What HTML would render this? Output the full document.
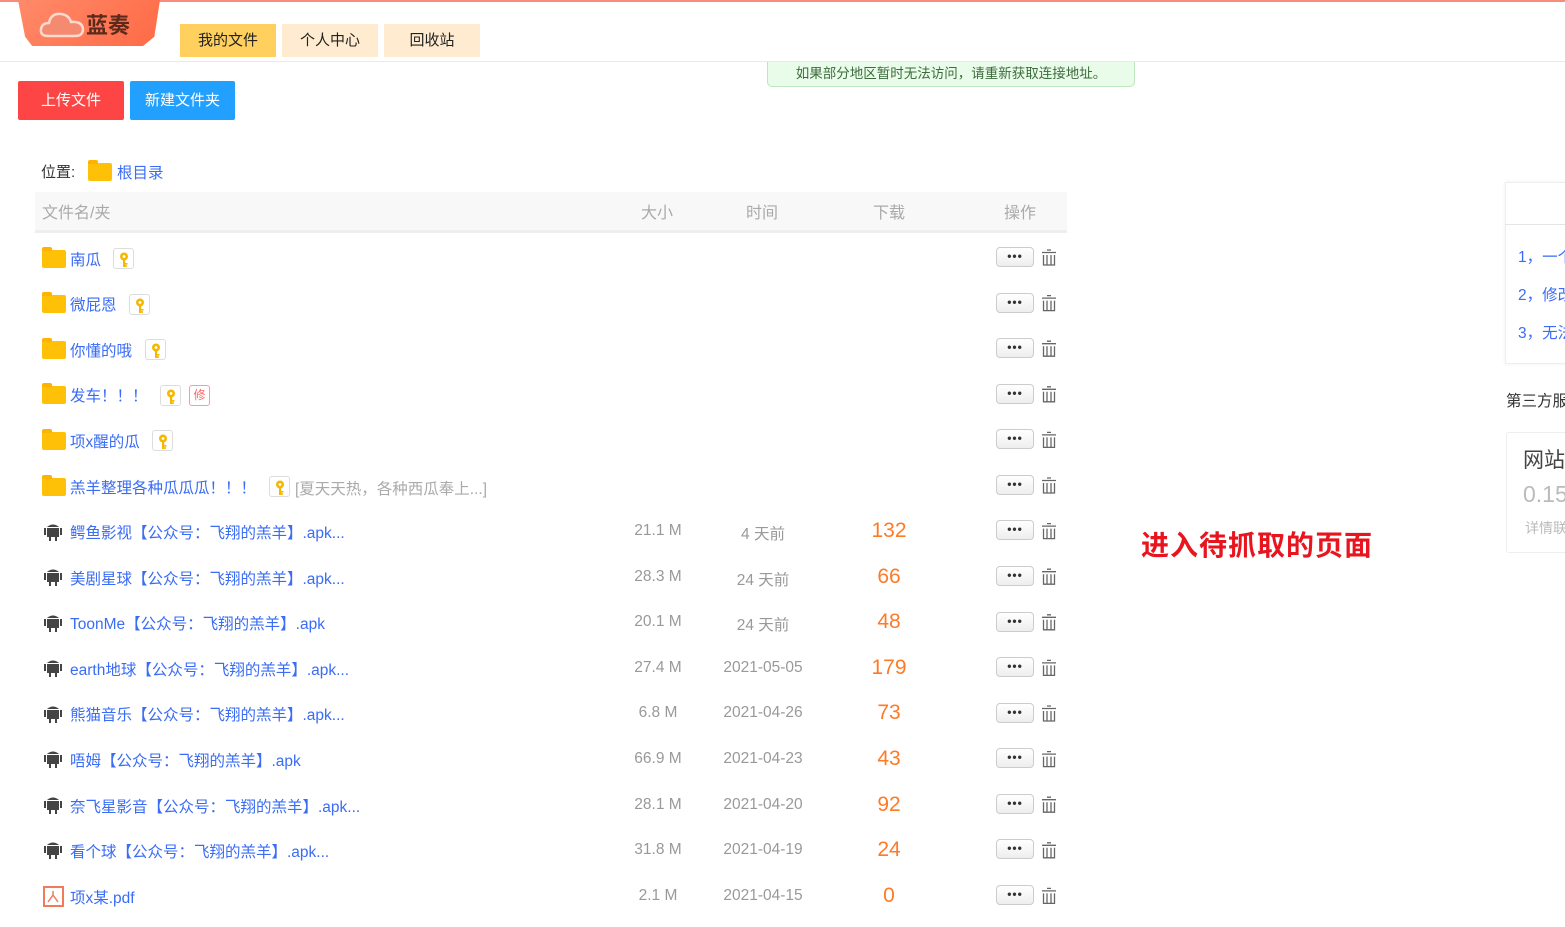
<!DOCTYPE html>
<html><head><meta charset="utf-8"><style>
*{margin:0;padding:0;box-sizing:border-box}
body{width:1565px;height:927px;overflow:hidden;background:#fff;font-family:"Liberation Sans","Noto Sans CJK SC",sans-serif;position:relative;font-size:15px}
.a{position:absolute;white-space:nowrap}
.topline{left:0;top:0;width:1565px;height:2px;background:#f98b7a}
.hdr{left:0;top:61px;width:1565px;height:1px;background:#eaeaea}
.logo{left:18px;top:0;width:142px;height:46px;background:linear-gradient(135deg,#ff8a6a,#ff6a45);clip-path:polygon(0 0,100% 0,96% 80%,88% 100%,10% 100%,5% 80%)}
.tab{top:24px;height:33px;line-height:33px;text-align:center;font-size:15px;color:#222}
.btn{top:81px;height:39px;line-height:39px;color:#fff;text-align:center;border-radius:2px;font-size:15px}
.note{left:767px;top:62px;width:368px;height:25px;background:#e9fbe9;border:1px solid #bde6bd;border-top:none;border-radius:0 0 5px 5px;font-size:13.5px;color:#3d6b3d;text-align:center;line-height:23px}
.th{top:192px;left:35px;width:1032px;height:41px;background:#f8f8f8;border-bottom:3px solid #eee}
.thc{top:199px;color:#aaa;font-size:16px}
.nm{left:70px;color:#3a6cf6;font-size:15.5px}
.sz{color:#999;font-size:15.5px;text-align:center}
.dl{color:#ff7a26;font-size:21px;text-align:center;width:80px;left:849px}
.more{left:996px;width:38px;height:20px;border:1px solid #ccc;border-radius:4px;background:linear-gradient(#fff,#eee);text-align:center;font-size:12px;line-height:16px;color:#333;font-weight:bold;letter-spacing:1px}
.key{width:21px;height:21px;border:1px solid #ddd;border-radius:3px;color:#f66;font-size:12px;text-align:center;line-height:19px}
.key svg{position:absolute;left:5px;top:3px}
.fold{left:42px;width:24px;height:18px;background:#ffc107;border-radius:2px}
.fold:before{content:"";position:absolute;left:0;top:-3px;width:10px;height:4px;background:#ffb300;border-radius:2px 2px 0 0}
</style></head><body>
<svg width="0" height="0" style="position:absolute"><defs>
<g id="k"><circle cx="5" cy="4.5" r="4" fill="#f5b800"/><circle cx="5" cy="4.5" r="1.4" fill="#fff"/><rect x="4" y="8" width="2.2" height="7" fill="#f5b800"/><rect x="6" y="11" width="2.5" height="1.6" fill="#f5b800"/><rect x="6" y="13.2" width="2" height="1.6" fill="#f5b800"/></g>
<g id="an"><g fill="#444"><rect x="4" y="6" width="12" height="9"/><path d="M4 5 Q10 0 16 5Z"/><rect x="1" y="6" width="2" height="7"/><rect x="17" y="6" width="2" height="7"/><rect x="6" y="15" width="2" height="4"/><rect x="12" y="15" width="2" height="4"/></g></g>
</defs></svg>
<div class="a topline"></div>
<div class="a logo"></div>
<svg class="a" style="left:38px;top:8px" width="48" height="32" viewBox="0 0 48 32"><path d="M10 28 Q2 28 3 21 Q4 15 11 15 Q13 5 23 6 Q31 7 33 14 Q44 13 45 21 Q45 28 37 28 Z" fill="#f48a70" stroke="#ffd9cf" stroke-width="2.5"/></svg>
<div class="a" style="left:86px;top:8px;font-size:22px;font-weight:bold;color:#5a2a1c">蓝奏</div>
<div class="a hdr"></div>
<div class="a tab" style="left:180px;width:96px;background:#ffd05e">我的文件</div>
<div class="a tab" style="left:282px;width:96px;background:#ffecd0">个人中心</div>
<div class="a tab" style="left:384px;width:96px;background:#ffecd0">回收站</div>
<div class="a note">如果部分地区暂时无法访问，请重新获取连接地址。</div>
<div class="a btn" style="left:18px;width:106px;background:#fe4545">上传文件</div>
<div class="a btn" style="left:130px;width:105px;background:#22a0ff">新建文件夹</div>
<div class="a" style="left:41px;top:161px;color:#333;font-size:15px">位置:</div>
<div class="a fold" style="left:88px;top:163px"></div>
<div class="a" style="left:117px;top:161px;color:#3a6cf6;font-size:15.5px">根目录</div>
<div class="a th"></div>
<div class="a thc" style="left:42px">文件名/夹</div>
<div class="a thc" style="left:641px">大小</div>
<div class="a thc" style="left:746px">时间</div>
<div class="a thc" style="left:873px">下载</div>
<div class="a thc" style="left:1004px">操作</div>

<div class="a fold" style="top:250px"></div><div class="a nm" style="top:248px">南瓜</div><div class="a key" style="left:113px;top:248px"><svg width="10" height="16"><use href="#k"/></svg></div>
<div class="a fold" style="top:295px"></div><div class="a nm" style="top:293px">微屁恩</div><div class="a key" style="left:129px;top:294px"><svg width="10" height="16"><use href="#k"/></svg></div>
<div class="a fold" style="top:341px"></div><div class="a nm" style="top:339px">你懂的哦</div><div class="a key" style="left:145px;top:339px"><svg width="10" height="16"><use href="#k"/></svg></div>
<div class="a fold" style="top:386px"></div><div class="a nm" style="top:384px">发车！！！</div><div class="a key" style="left:160px;top:385px"><svg width="10" height="16"><use href="#k"/></svg></div><div class="a key" style="left:189px;top:385px;border-color:#f99">修</div>
<div class="a fold" style="top:432px"></div><div class="a nm" style="top:430px">项x醒的瓜</div><div class="a key" style="left:152px;top:430px"><svg width="10" height="16"><use href="#k"/></svg></div>
<div class="a fold" style="top:478px"></div><div class="a nm" style="top:476px">羔羊整理各种瓜瓜瓜！！！</div><div class="a key" style="left:269px;top:476px"><svg width="10" height="16"><use href="#k"/></svg></div><div class="a" style="left:295px;top:477px;color:#aaa;font-size:15.5px">[夏天天热，各种西瓜奉上...]</div>

<svg class="a" style="left:43px;top:522px" width="20" height="20"><use href="#an"/></svg>
<svg class="a" style="left:43px;top:567px" width="20" height="20"><use href="#an"/></svg>
<svg class="a" style="left:43px;top:613px" width="20" height="20"><use href="#an"/></svg>
<svg class="a" style="left:43px;top:658px" width="20" height="20"><use href="#an"/></svg>
<svg class="a" style="left:43px;top:704px" width="20" height="20"><use href="#an"/></svg>
<svg class="a" style="left:43px;top:749px" width="20" height="20"><use href="#an"/></svg>
<svg class="a" style="left:43px;top:795px" width="20" height="20"><use href="#an"/></svg>
<svg class="a" style="left:43px;top:840px" width="20" height="20"><use href="#an"/></svg>
<svg class="a" style="left:43px;top:886px" width="21" height="21" viewBox="0 0 21 21"><rect x="1" y="1" width="19" height="19" fill="none" stroke="#f07a5a" stroke-width="2"/><path d="M10 5 L10 9 L5 16 M10 9 L15 16" stroke="#f07a5a" stroke-width="1.5" fill="none"/></svg>
<div class="a nm" style="top:521px">鳄鱼影视【公众号：飞翔的羔羊】.apk...</div>
<div class="a nm" style="top:567px">美剧星球【公众号：飞翔的羔羊】.apk...</div>
<div class="a nm" style="top:612px">ToonMe【公众号：飞翔的羔羊】.apk</div>
<div class="a nm" style="top:658px">earth地球【公众号：飞翔的羔羊】.apk...</div>
<div class="a nm" style="top:703px">熊猫音乐【公众号：飞翔的羔羊】.apk...</div>
<div class="a nm" style="top:749px">唔姆【公众号：飞翔的羔羊】.apk</div>
<div class="a nm" style="top:795px">奈飞星影音【公众号：飞翔的羔羊】.apk...</div>
<div class="a nm" style="top:840px">看个球【公众号：飞翔的羔羊】.apk...</div>
<div class="a nm" style="top:886px">项x某.pdf</div>

<div class="a sz" style="left:618px;width:80px;top:522px">21.1 M</div><div class="a sz" style="left:713px;width:100px;top:522px">4 天前</div><div class="a dl" style="top:519px">132</div>
<div class="a sz" style="left:618px;width:80px;top:568px">28.3 M</div><div class="a sz" style="left:713px;width:100px;top:568px">24 天前</div><div class="a dl" style="top:565px">66</div>
<div class="a sz" style="left:618px;width:80px;top:613px">20.1 M</div><div class="a sz" style="left:713px;width:100px;top:613px">24 天前</div><div class="a dl" style="top:610px">48</div>
<div class="a sz" style="left:618px;width:80px;top:659px">27.4 M</div><div class="a sz" style="left:713px;width:100px;top:659px">2021-05-05</div><div class="a dl" style="top:656px">179</div>
<div class="a sz" style="left:618px;width:80px;top:704px">6.8 M</div><div class="a sz" style="left:713px;width:100px;top:704px">2021-04-26</div><div class="a dl" style="top:701px">73</div>
<div class="a sz" style="left:618px;width:80px;top:750px">66.9 M</div><div class="a sz" style="left:713px;width:100px;top:750px">2021-04-23</div><div class="a dl" style="top:747px">43</div>
<div class="a sz" style="left:618px;width:80px;top:796px">28.1 M</div><div class="a sz" style="left:713px;width:100px;top:796px">2021-04-20</div><div class="a dl" style="top:793px">92</div>
<div class="a sz" style="left:618px;width:80px;top:841px">31.8 M</div><div class="a sz" style="left:713px;width:100px;top:841px">2021-04-19</div><div class="a dl" style="top:838px">24</div>
<div class="a sz" style="left:618px;width:80px;top:887px">2.1 M</div><div class="a sz" style="left:713px;width:100px;top:887px">2021-04-15</div><div class="a dl" style="top:884px">0</div>

<div class="a more" style="top:247px">•••</div><div class="a more" style="top:293px">•••</div><div class="a more" style="top:338px">•••</div><div class="a more" style="top:384px">•••</div><div class="a more" style="top:429px">•••</div><div class="a more" style="top:475px">•••</div><div class="a more" style="top:520px">•••</div><div class="a more" style="top:566px">•••</div><div class="a more" style="top:612px">•••</div><div class="a more" style="top:657px">•••</div><div class="a more" style="top:703px">•••</div><div class="a more" style="top:748px">•••</div><div class="a more" style="top:794px">•••</div><div class="a more" style="top:839px">•••</div><div class="a more" style="top:885px">•••</div>
<svg class="a" style="left:1041px;top:249px" width="16" height="670" viewBox="0 0 16 670"><defs><g id="t"><path d="M1 3.5H15M6 1H10M2.5 6V16H13.5V6M6 6V16M10 6V16" stroke="#666" stroke-width="1.3" fill="none"/></g></defs>
<use href="#t" y="0"/><use href="#t" y="45.6"/><use href="#t" y="91.2"/><use href="#t" y="136.8"/><use href="#t" y="182.4"/><use href="#t" y="228"/><use href="#t" y="273.6"/><use href="#t" y="319.2"/><use href="#t" y="364.8"/><use href="#t" y="410.4"/><use href="#t" y="456"/><use href="#t" y="501.6"/><use href="#t" y="547.2"/><use href="#t" y="592.8"/><use href="#t" y="638.4"/></svg>

<div class="a" style="left:1141px;top:524px;font-size:28px;font-weight:bold;color:#e8141e;letter-spacing:1px">进入待抓取的页面</div>

<div class="a" style="left:1505px;top:182px;width:70px;height:182px;border:1px solid #eee;box-shadow:0 0 3px #eee"></div>
<div class="a" style="left:1505px;top:224px;width:70px;height:1px;background:#e5e5e5"></div>
<div class="a" style="left:1518px;top:245px;color:#3a6cf6;font-size:15.5px">1，一个</div>
<div class="a" style="left:1518px;top:283px;color:#3a6cf6;font-size:15.5px">2，修改</div>
<div class="a" style="left:1518px;top:321px;color:#3a6cf6;font-size:15.5px">3，无法</div>
<div class="a" style="left:1506px;top:389px;color:#333;font-size:15.5px">第三方服</div>
<div class="a" style="left:1506px;top:432px;width:70px;height:121px;border:1px solid #eee;border-radius:3px"></div>
<div class="a" style="left:1523px;top:444px;color:#444;font-size:21px">网站</div>
<div class="a" style="left:1523px;top:481px;color:#bbb;font-size:23px">0.15</div>
<div class="a" style="left:1525px;top:518px;color:#bbb;font-size:14px">详情联</div>
</body></html>
